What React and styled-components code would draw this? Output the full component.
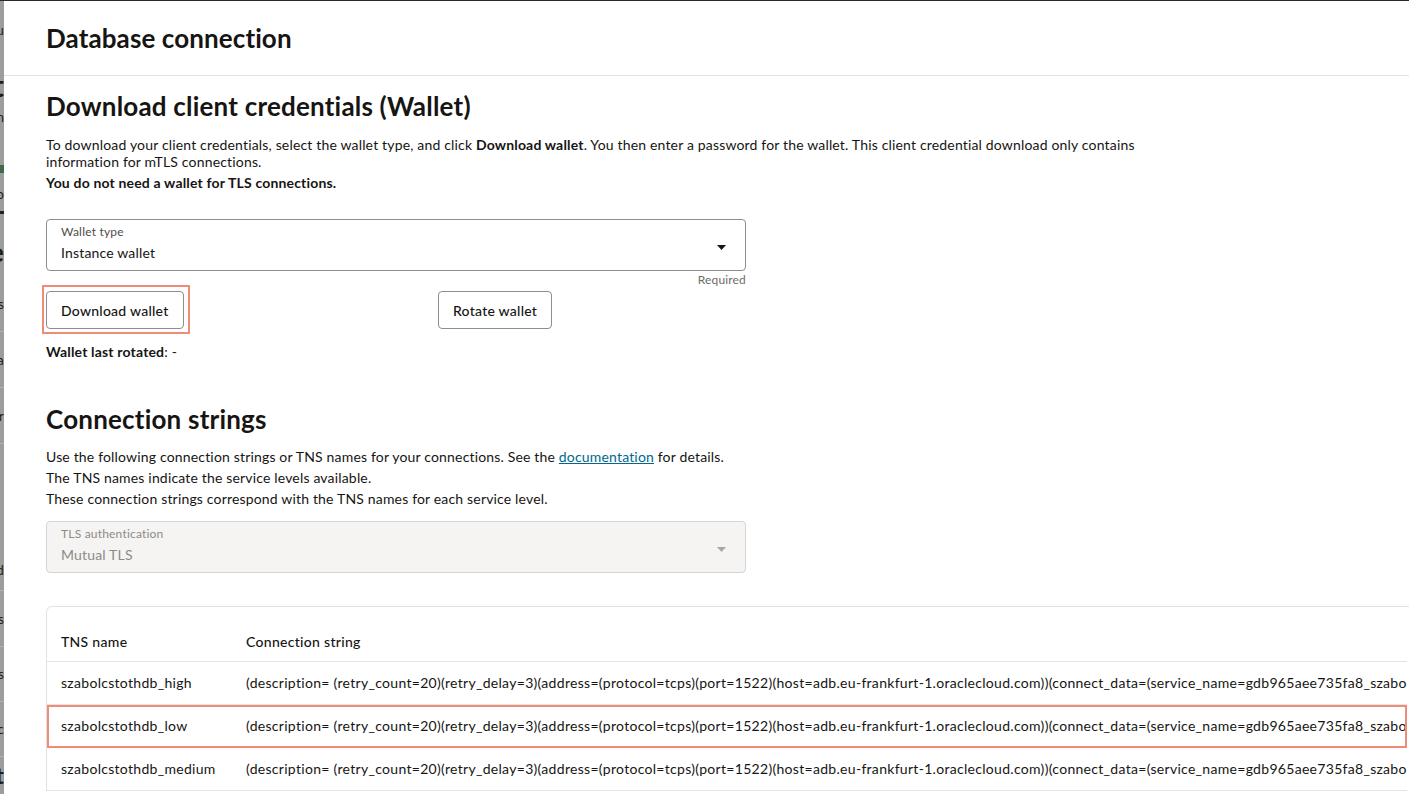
import styled, { createGlobalStyle } from "styled-components";

const GlobalStyle = createGlobalStyle`
  html, body {
    margin: 0;
    padding: 0;
    background: #fff;
  }
  body {
    font-family: Lato, "Noto Sans", sans-serif;
    color: #161513;
    overflow: hidden;
    letter-spacing: 0.17px;
  }
`;

const Page = styled.div`
  display: flex;
  height: 794px;
  border-top: 1px solid #2b2a26;
  box-sizing: border-box;
  overflow: hidden;
`;

/* the page behind the panel, dimmed by the scrim */
const Backdrop = styled.div`
  width: 4px;
  flex: none;
  background: #9d9d9b;
  display: flex;
  flex-direction: column;
  overflow: hidden;
`;

const Fragment = styled.div`
  height: ${(p) => p.h}px;
  flex: none;
  display: flex;
  align-items: center;
  justify-content: flex-end;
  overflow: hidden;
  white-space: nowrap;
  font-size: ${(p) => p.size || 13}px;
  font-weight: ${(p) => (p.bold ? 700 : 400)};
  color: #1e1e1c;
  background: ${(p) => p.fill || "transparent"};
  border-bottom: ${(p) => (p.line ? "1px solid #b3b3b1" : "none")};
  box-sizing: border-box;
`;

const Panel = styled.div`
  flex: 1;
  min-width: 0;
  background: #fff;
  display: flex;
  flex-direction: column;
`;

const Header = styled.header`
  height: 75px;
  flex: none;
  box-sizing: border-box;
  border-bottom: 1px solid #e2e2e0;
  display: flex;
  align-items: center;
  padding-left: 42px;
`;

const Title = styled.h1`
  margin: 0;
  font-size: 26px;
  line-height: 32px;
  font-weight: 700;
  letter-spacing: 0.1px;
`;

const Body = styled.div`
  padding-left: 42px;
  display: flex;
  flex-direction: column;
  align-items: flex-start;
`;

const Heading = styled.h2`
  margin: ${(p) => p.top}px 0 0;
  font-size: 26px;
  line-height: 32px;
  font-weight: 700;
  letter-spacing: 0.2px;
`;

const Text = styled.p`
  margin: ${(p) => p.top || 0}px 0 0;
  font-size: 14px;
  line-height: ${(p) => p.lh || 17}px;
  font-weight: ${(p) => (p.bold ? 700 : 400)};
`;

const Link = styled.a`
  color: #00688c;
  text-decoration: underline;
`;

const Field = styled.div`
  margin-top: ${(p) => p.top}px;
  width: 700px;
  height: 52px;
  box-sizing: border-box;
  border: 1px solid ${(p) => (p.disabled ? "#d6d5d3" : "#8f8e8c")};
  border-radius: 4px;
  background: ${(p) => (p.disabled ? "#f5f4f2" : "#fff")};
  padding: 5px 19px 0 14px;
  display: flex;
  align-items: center;
`;

const FieldText = styled.div`
  flex: 1;
  display: flex;
  flex-direction: column;
  align-self: flex-start;
`;

const FieldLabel = styled.span`
  font-size: 12px;
  line-height: 14px;
  letter-spacing: 0.2px;
  color: ${(p) => (p.disabled ? "#8d8b88" : "#4f4c49")};
`;

const FieldValue = styled.span`
  margin-top: 5px;
  font-size: 14px;
  line-height: 18px;
  color: ${(p) => (p.disabled ? "#8d8b88" : "#161513")};
`;

const Caret = ({ color }) => (
  <svg width="9" height="5" viewBox="0 0 9 5">
    <path d="M0 0h9L4.5 5z" fill={color} />
  </svg>
);

const Hint = styled.div`
  width: 700px;
  margin-top: 2px;
  text-align: right;
  font-size: 12px;
  line-height: 14px;
  color: #6f6c68;
`;

const ButtonRow = styled.div`
  margin-top: 4px;
  display: grid;
  grid-template-columns: 392px auto;
  justify-items: start;
`;

const Button = styled.button`
  position: relative;
  height: 38px;
  padding: 0 14px;
  border: 1px solid #8f8e8c;
  border-radius: 4px;
  background: #fff;
  font-family: inherit;
  font-size: 14px;
  font-weight: 500;
  letter-spacing: 0.25px;
  color: #161513;

  &::after {
    content: "";
    display: ${(p) => (p.marked ? "block" : "none")};
    position: absolute;
    left: -5px;
    right: -7px;
    top: -7px;
    bottom: -6px;
    border: 2px solid #ef8b76;
  }
`;

const Table = styled.div`
  margin-top: 33px;
  align-self: stretch;
  border-top: 1px solid #e2e2e0;
  border-left: 1px solid #e2e2e0;
  border-top-left-radius: 6px;
  overflow: hidden;
`;

const Row = styled.div`
  display: grid;
  grid-template-columns: 185px 1fr;
  height: ${(p) => (p.head ? 55 : 43)}px;
  box-sizing: border-box;
  border-bottom: 1px solid #e4e4e2;
  align-items: ${(p) => (p.head ? "end" : "center")};
  padding-bottom: ${(p) => (p.head ? 9 : 0)}px;
  outline: ${(p) => (p.marked ? "2px solid #ef8b76" : "none")};
  outline-offset: -2px;
  margin-right: 2px;
  font-size: 14px;
  line-height: 20px;
  letter-spacing: 0.3px;
  font-weight: ${(p) => (p.head ? 500 : 400)};
`;

const Cell = styled.div`
  padding-left: 14px;
  white-space: nowrap;
  overflow: hidden;
`;

const connection = (level) =>
  `(description= (retry_count=20)(retry_delay=3)(address=(protocol=tcps)(port=1522)(host=adb.eu-frankfurt-1.oraclecloud.com))(connect_data=(service_name=gdb965aee735fa8_szabolcstothdb_${level}.adb.oraclecloud.com))(security=(ssl_server_dn_match=yes)))`;

const rows = [
  { name: "szabolcstothdb_high", level: "high" },
  { name: "szabolcstothdb_low", level: "low", marked: true },
  { name: "szabolcstothdb_medium", level: "medium" },
];

const backdrop = [
  { h: 19 },
  { h: 20, t: "u" },
  { h: 30 },
  { h: 30, t: "t", size: 30, bold: true },
  { h: 8 },
  { h: 18, t: "m" },
  { h: 39 },
  { h: 8, fill: "#3f6a4c" },
  { h: 12 },
  { h: 18, t: "o" },
  { h: 8 },
  { h: 3, fill: "#222" },
  { h: 25 },
  { h: 26, t: "e", size: 26, bold: true },
  { h: 30 },
  { h: 18, t: "s" },
  { h: 19, line: true },
  { h: 56, t: "a", line: true },
  { h: 56, t: "r", line: true },
  { h: 105 },
  { h: 42, t: "d", line: true },
  { h: 56, t: "s", line: true },
  { h: 55, t: "s", line: true },
  { h: 55, t: "c", line: true },
  { h: 36, t: "t", size: 22, bold: true },
];

const App = () => {
  return (
    <>
      <GlobalStyle />
      <Page>
        <Backdrop>
          {backdrop.map((f, i) => (
            <Fragment key={i} h={f.h} size={f.size} bold={f.bold} fill={f.fill} line={f.line}>
              {f.t}
            </Fragment>
          ))}
        </Backdrop>
        <Panel>
          <Header>
            <Title>Database connection</Title>
          </Header>
          <Body>
            <Heading top={14}>Download client credentials (Wallet)</Heading>
            <Text top={14}>
              To download your client credentials, select the wallet type, and click <b>Download wallet</b>. You then
              enter a password for the wallet. This client credential download only contains
              <br />
              information for mTLS connections.
            </Text>
            <Text top={4} bold>
              You do not need a wallet for TLS connections.
            </Text>

            <Field top={28}>
              <FieldText>
                <FieldLabel>Wallet type</FieldLabel>
                <FieldValue>Instance wallet</FieldValue>
              </FieldText>
              <Caret color="#161513" />
            </Field>
            <Hint>Required</Hint>

            <ButtonRow>
              <Button marked>Download wallet</Button>
              <Button>Rotate wallet</Button>
            </ButtonRow>

            <Text top={13} lh={20}>
              <b>Wallet last rotated</b>: -
            </Text>

            <Heading top={41}>Connection strings</Heading>
            <Text top={11} lh={21}>
              Use the following connection strings or TNS names for your connections. See the{" "}
              <Link href="#">documentation</Link> for details.
              <br />
              The TNS names indicate the service levels available.
              <br />
              These connection strings correspond with the TNS names for each service level.
            </Text>

            <Field top={12} disabled>
              <FieldText>
                <FieldLabel disabled>TLS authentication</FieldLabel>
                <FieldValue disabled>Mutual TLS</FieldValue>
              </FieldText>
              <Caret color="#a9a7a4" />
            </Field>

            <Table>
              <Row head>
                <Cell>TNS name</Cell>
                <Cell>Connection string</Cell>
              </Row>
              {rows.map((r) => (
                <Row key={r.name} marked={r.marked}>
                  <Cell>{r.name}</Cell>
                  <Cell>{connection(r.level)}</Cell>
                </Row>
              ))}
            </Table>
          </Body>
        </Panel>
      </Page>
    </>
  );
};

export default App;
